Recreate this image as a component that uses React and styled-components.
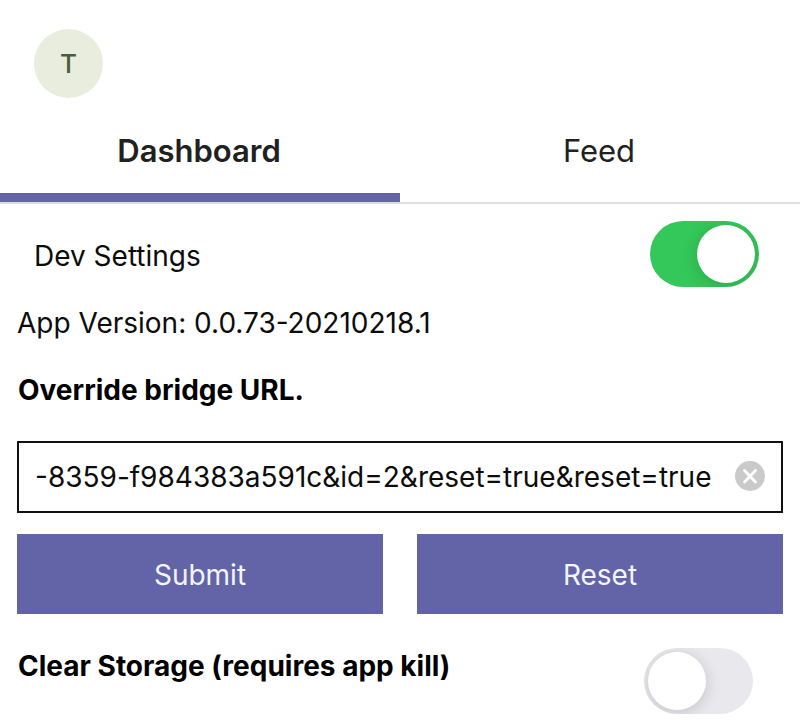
import React, { useState } from "react";
import styled, { createGlobalStyle } from "styled-components";

const GlobalStyle = createGlobalStyle`
  *, *::before, *::after { box-sizing: border-box; }
  body {
    margin: 0;
    background: #fff;
    color: #0c0c0c;
    font-family: Inter, "Liberation Sans", sans-serif;
    font-size: 28px;
    line-height: 32px;
  }
  button, input { font: inherit; }
`;

const Header = styled.header`
  padding: 29px 34px 0;
`;

const Avatar = styled.div`
  display: grid;
  place-items: center;
  width: 69px;
  height: 69px;
  border-radius: 50%;
  background: #e8eddd;
  color: #486038;
  font-size: 26px;
  font-weight: 500;
`;

const Tabs = styled.nav`
  display: grid;
  grid-template-columns: 1fr 1fr;
  height: 106px;
  border-bottom: 2px solid #dedede;
`;

const Tab = styled.button`
  padding: 10px 2px 0 0;
  border: 0;
  border-bottom: 9px solid ${(p) => (p.$active ? "#6264a7" : "transparent")};
  background: none;
  color: #212121;
  font-size: 31px;
  font-weight: ${(p) => (p.$active ? 600 : 400)};
`;

const Content = styled.main`
  display: flex;
  flex-direction: column;
  padding: 16px 17px 0;
`;

const SettingRow = styled.div`
  display: flex;
  align-items: center;
  justify-content: space-between;
  height: 68px;
  margin-bottom: 19px;
  padding: 0 24px 0 17px;
`;

const SettingLabel = styled.label`
  padding-top: 3px;
`;

const Switch = styled.input`
  appearance: none;
  flex: none;
  display: flex;
  width: 109px;
  height: 66px;
  margin: 0;
  padding: 4px;
  border-radius: 33px;
  overflow: hidden;
  background: #e9e9ed;
  &::before {
    content: "";
    width: 58px;
    height: 58px;
    border-radius: 50%;
    background: #fff;
    box-shadow: 0 3px 16px rgba(0, 0, 0, 0.16);
  }
  &:checked {
    justify-content: flex-end;
    background: #34c759;
  }
`;

const Version = styled.p`
  margin: 0 0 35px;
`;

const Title = styled.label`
  padding-left: 1px;
  color: #000;
  font-weight: 700;
`;

const Field = styled.div`
  display: flex;
  align-items: center;
  height: 72px;
  margin: 35px 0 21px;
  padding: 0 16px;
  border: 2px solid #111;
`;

const UrlInput = styled.input`
  flex: 1;
  min-width: 0;
  padding: 0;
  border: 0;
  outline: 0;
  background: none;
  color: #0c0c0c;
`;

const ClearButton = styled.button`
  display: flex;
  padding: 0 0 2px;
  border: 0;
  background: none;
`;

const Actions = styled.div`
  display: grid;
  grid-template-columns: 1fr 1fr;
  gap: 34px;
`;

const Action = styled.button`
  height: 80px;
  padding: 2px 0 0;
  border: 0;
  background: #6264a7;
  color: #f4f4ff;
`;

const StorageRow = styled.div`
  display: flex;
  justify-content: space-between;
  padding: 34px 30px 8px 0;
`;

const StorageTitle = styled(Title)`
  padding-top: 2px;
`;

export default function App() {
  const [tab, setTab] = useState("Dashboard");
  const [dev, setDev] = useState(true);
  const [clear, setClear] = useState(false);
  const [url, setUrl] = useState("-8359-f984383a591c&id=2&reset=true&reset=true");
  return (
    <>
      <GlobalStyle />
      <Header><Avatar>T</Avatar></Header>
      <Tabs>
        {["Dashboard", "Feed"].map((name) => (
          <Tab key={name} $active={tab === name} onClick={() => setTab(name)}>{name}</Tab>
        ))}
      </Tabs>
      <Content>
        <SettingRow>
          <SettingLabel htmlFor="dev">Dev Settings</SettingLabel>
          <Switch id="dev" type="checkbox" checked={dev} onChange={(e) => setDev(e.target.checked)} />
        </SettingRow>
        <Version>App Version: 0.0.73-20210218.1</Version>
        <Title htmlFor="url">Override bridge URL.</Title>
        <Field>
          <UrlInput id="url" value={url} onChange={(e) => setUrl(e.target.value)} />
          <ClearButton aria-label="Clear text" onClick={() => setUrl("")}>
            <svg width="30" height="30" viewBox="0 0 30 30">
              <circle cx="15" cy="15" r="15" fill="#cacaca" />
              <path d="M9.5 9.5l11 11.5M20.5 9.5l-11 11.5" stroke="#fff" strokeWidth="2.8" strokeLinecap="round" />
            </svg>
          </ClearButton>
        </Field>
        <Actions>
          <Action>Submit</Action>
          <Action>Reset</Action>
        </Actions>
        <StorageRow>
          <StorageTitle htmlFor="clear">Clear Storage (requires app kill)</StorageTitle>
          <Switch id="clear" type="checkbox" checked={clear} onChange={(e) => setClear(e.target.checked)} />
        </StorageRow>
      </Content>
    </>
  );
}
